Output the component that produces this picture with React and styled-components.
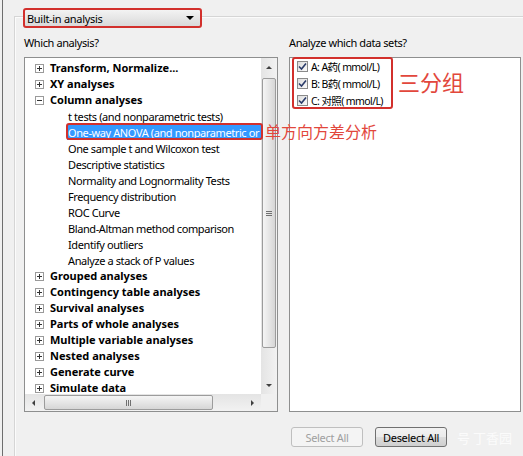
import React from 'react';
import styled, { createGlobalStyle } from 'styled-components';

const Global = createGlobalStyle`
  html, body { margin: 0; padding: 0; background: #f0f0f0; }
  body {
    width: 523px; height: 456px; overflow: hidden;
    font-family: "Noto Sans", "Liberation Sans", "Noto Sans CJK SC", sans-serif;
    font-size: 11px; color: #000;
  }
  * { box-sizing: border-box; }
`;

const Window = styled.div`
  height: 456px;
  margin-left: 2px;
  border-left: 1px solid #6e6e6e;
  padding: 16px 0 0 11px;
`;

const Panel = styled.div`
  position: relative;
  height: 100%;
  border-top: 1px solid #d5d5d5;
  border-left: 1px solid #d5d5d5;
  box-shadow: inset 1px 1px 0 #fbfbfb;
  padding-left: 8px;
  display: flex;
  flex-direction: column;
`;

const DropFrame = styled.div`
  margin-top: -9px;
  width: 179px;
  height: 20px;
  border: 2px solid #d2302c;
  border-radius: 3px;
  background: linear-gradient(#f3f3f3, #e6e6e6 50%, #d9d9d9);
  display: flex;
  align-items: center;
  justify-content: space-between;
  padding: 0 6px 0 2px;
  font-size: 11px;
  letter-spacing: -0.3px;
`;

const Arrow = styled.span`
  width: 0; height: 0;
  border-left: 4px solid transparent;
  border-right: 4px solid transparent;
  border-top: 4px solid #000;
`;

const Columns = styled.div`
  margin: 8px 0 0 1px;
  display: grid;
  grid-template-columns: 254px 232px;
  column-gap: 11px;
`;

const Column = styled.div`
  display: flex;
  flex-direction: column;
`;

const Label = styled.div`
  height: 14px;
  line-height: 14px;
  margin-bottom: 7px;
  letter-spacing: -0.4px;
`;

const ListBox = styled.div`
  height: 355px;
  border: 1px solid #8e8f8f;
  background: #fff;
  display: grid;
  grid-template-columns: 236px 16px;
  grid-template-rows: 336px 17px;
`;

const TreeArea = styled.div`
  overflow: hidden;
  padding-top: 2px;
`;

const Row = styled.div`
  height: 16px;
  line-height: 16px;
  white-space: nowrap;
  display: flex;
  align-items: center;
  padding-left: ${p => (p.$child ? 42 : 10)}px;
`;

const Group = styled.span`
  font-weight: 700;
  margin-left: 6px;
  font-size: 11px;
`;

const Item = styled.span`
  padding: 0 1px;
  line-height: 15px;
  letter-spacing: -0.4px;
  background: ${p => (p.$selected ? '#3399ff' : 'transparent')};
  color: ${p => (p.$selected ? '#fff' : '#000')};
`;

const VScroll = styled.div`
  background: linear-gradient(to right, #e4e4e4, #f2f2f2);
  display: flex;
  flex-direction: column;
  align-items: center;
`;

const HScroll = styled.div`
  background: linear-gradient(#e4e4e4, #f2f2f2);
  display: flex;
  align-items: center;
`;

const Corner = styled.div`
  background: #f0f0f0;
`;

const ArrowBtn = styled.div`
  width: ${p => (p.$h ? 17 : 16)}px;
  height: ${p => (p.$h ? 17 : 18)}px;
  flex: none;
  display: flex;
  align-items: center;
  justify-content: center;
`;

const Tri = styled.span`
  width: 0; height: 0;
  ${p => p.$dir === 'up' && 'border-left:3px solid transparent;border-right:3px solid transparent;border-bottom:3px solid #404040;'}
  ${p => p.$dir === 'down' && 'border-left:3px solid transparent;border-right:3px solid transparent;border-top:3px solid #404040;'}
  ${p => p.$dir === 'left' && 'border-top:3px solid transparent;border-bottom:3px solid transparent;border-right:3px solid #404040;'}
  ${p => p.$dir === 'right' && 'border-top:3px solid transparent;border-bottom:3px solid transparent;border-left:3px solid #404040;'}
`;

const VThumb = styled.div`
  width: 14px;
  height: 270px;
  margin-top: 2px;
  border: 1px solid #9c9c9c;
  border-radius: 2px;
  background: linear-gradient(to right, #f5f5f5, #e6e6e6 50%, #d6d6d6);
  display: flex;
  flex-direction: column;
  align-items: center;
  justify-content: center;
  gap: 1px;
`;

const HThumb = styled.div`
  height: 15px;
  width: 169px;
  margin-left: 2px;
  border: 1px solid #9c9c9c;
  border-radius: 2px;
  background: linear-gradient(#f5f5f5, #e6e6e6 50%, #d6d6d6);
  display: flex;
  align-items: center;
  justify-content: center;
  gap: 1px;
`;

const Grip = styled.span`
  display: block;
  background: #707070;
  width: ${p => (p.$h ? 1 : 6)}px;
  height: ${p => (p.$h ? 6 : 1)}px;
`;

const Spacer = styled.div`
  flex: 1;
`;

const DataBox = styled.div`
  height: 355px;
  border: 1px solid #8e8f8f;
  background: #fff;
`;

const CheckRow = styled.div`
  height: 17px;
  display: flex;
  align-items: center;
  gap: 3px;
  padding-left: 7px;
  white-space: nowrap;
  font-family: "Noto Sans", "Noto Sans CJK SC", sans-serif;
  font-size: 10.5px;
  letter-spacing: -0.6px;
`;

const Box = styled.span`
  width: 11px;
  height: 11px;
  border: 1px solid #8a8a8a;
  background: linear-gradient(135deg, #dcdcdc, #fafafa);
  display: flex;
  align-items: center;
  justify-content: center;
`;

const ButtonRow = styled.div`
  margin: 15px 0 0 2px;
  display: flex;
  align-items: center;
  gap: 12px;
`;

const Button = styled.button`
  width: 72px;
  height: 20px;
  padding: 0;
  font-family: inherit;
  font-size: 11px;
  letter-spacing: -0.3px;
  border-radius: 3px;
  border: 1px solid ${p => (p.disabled ? '#bfbfbf' : '#707070')};
  color: ${p => (p.disabled ? '#a0a0a0' : '#000')};
  background: ${p => (p.disabled ? '#f4f4f4' : 'linear-gradient(#f2f2f2, #ebebeb 50%, #dddddd 51%, #cfcfcf)')};
`;

const Watermark = styled.span`
  margin-left: -2px;
  font-size: 13px;
  color: rgba(255, 255, 255, 0.8);
  font-family: "Noto Sans CJK SC", sans-serif;
  white-space: nowrap;
`;

const RedBox = styled.div`
  position: absolute;
  border: 2px solid #d2302c;
  border-radius: 3px;
  pointer-events: none;
`;

const Note = styled.div`
  position: absolute;
  color: #e2473c;
  font-family: "Noto Sans CJK SC", sans-serif;
  white-space: nowrap;
  line-height: 1;
  font-size: ${p => p.$size}px;
`;

function PlusBox({ open }) {
  return (
    <svg width="9" height="9" viewBox="0 0 9 9" style={{ flex: 'none' }}>
      <rect x="0.5" y="0.5" width="8" height="8" fill="#fff" stroke="#9a9a9a" />
      <path d="M2 4.5h5" stroke="#333" />
      {!open && <path d="M4.5 2v5" stroke="#333" />}
    </svg>
  );
}

function Check() {
  return (
    <svg width="9" height="9" viewBox="0 0 9 9">
      <path d="M1 4.5 L3.5 7 L8 1.5" fill="none" stroke="#2b3c6a" strokeWidth="1.6" />
    </svg>
  );
}

const groupsBefore = ['Transform, Normalize...', 'XY analyses'];
const children = [
  't tests (and nonparametric tests)',
  'One-way ANOVA (and nonparametric or mixed)',
  'One sample t and Wilcoxon test',
  'Descriptive statistics',
  'Normality and Lognormality Tests',
  'Frequency distribution',
  'ROC Curve',
  'Bland-Altman method comparison',
  'Identify outliers',
  'Analyze a stack of P values',
];
const groupsAfter = [
  'Grouped analyses',
  'Contingency table analyses',
  'Survival analyses',
  'Parts of whole analyses',
  'Multiple variable analyses',
  'Nested analyses',
  'Generate curve',
  'Simulate data',
];
const dataSets = ['A: A药( mmol/L)', 'B: B药( mmol/L)', 'C: 对照( mmol/L)'];

export default function App() {
  return (
    <>
      <Global />
      <Window>
        <Panel>
          <DropFrame>
            <span>Built-in analysis</span>
            <Arrow />
          </DropFrame>
          <Columns>
            <Column>
              <Label>Which analysis?</Label>
              <ListBox>
                <TreeArea>
                  {groupsBefore.map(g => (
                    <Row key={g}><PlusBox /><Group>{g}</Group></Row>
                  ))}
                  <Row><PlusBox open /><Group>Column analyses</Group></Row>
                  {children.map((c, i) => (
                    <Row key={c} $child><Item $selected={i === 1}>{c}</Item></Row>
                  ))}
                  {groupsAfter.map(g => (
                    <Row key={g}><PlusBox /><Group>{g}</Group></Row>
                  ))}
                </TreeArea>
                <VScroll>
                  <ArrowBtn><Tri $dir="up" /></ArrowBtn>
                  <VThumb><Grip /><Grip /><Grip /></VThumb>
                  <Spacer />
                  <ArrowBtn><Tri $dir="down" /></ArrowBtn>
                </VScroll>
                <HScroll>
                  <ArrowBtn $h><Tri $dir="left" /></ArrowBtn>
                  <HThumb><Grip $h /><Grip $h /><Grip $h /></HThumb>
                  <Spacer />
                  <ArrowBtn $h><Tri $dir="right" /></ArrowBtn>
                </HScroll>
                <Corner />
              </ListBox>
            </Column>
            <Column>
              <Label>Analyze which data sets?</Label>
              <DataBox>
                {dataSets.map(d => (
                  <CheckRow key={d}><Box><Check /></Box><span>{d}</span></CheckRow>
                ))}
              </DataBox>
              <ButtonRow>
                <Button disabled>Select All</Button>
                <Button>Deselect All</Button>
                <Watermark>号 丁香园</Watermark>
              </ButtonRow>
            </Column>
          </Columns>
          <RedBox style={{ left: 51, top: 106, width: 197, height: 17 }} />
          <Note $size={16} style={{ left: 250, top: 106 }}>单方向方差分析</Note>
          <RedBox style={{ left: 277, top: 40, width: 101, height: 52 }} />
          <Note $size={22} style={{ left: 383, top: 53 }}>三分组</Note>
        </Panel>
      </Window>
    </>
  );
}
